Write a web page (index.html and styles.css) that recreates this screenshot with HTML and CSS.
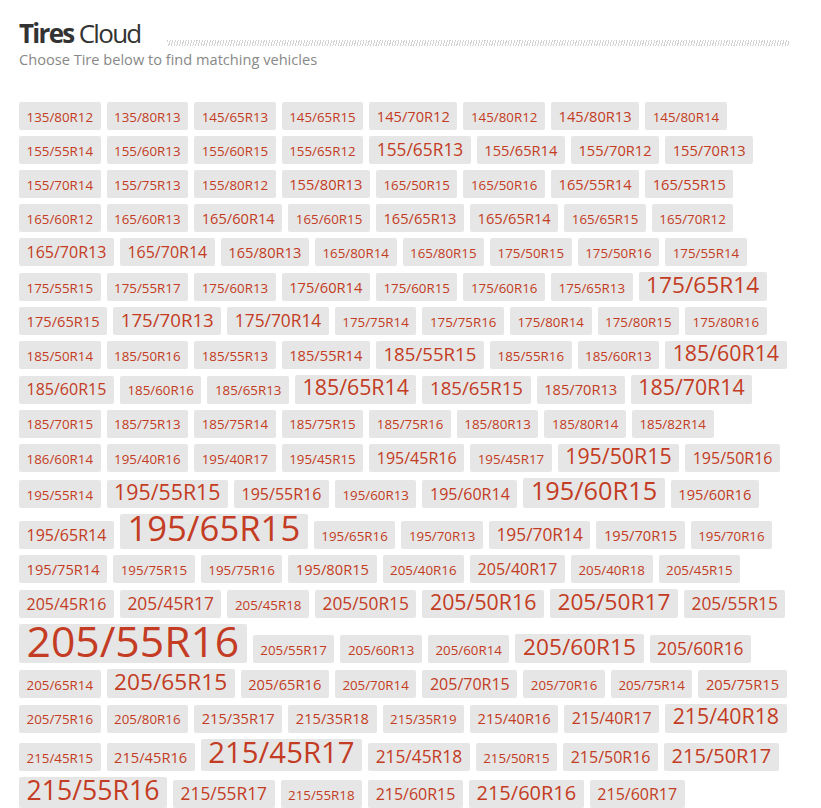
FILE: index.html
```html
<!DOCTYPE html>
<html lang="en">
<head>
<meta charset="utf-8">
<title>Tires Cloud</title>
<link rel="stylesheet" href="styles.css">
</head>
<body>
<div class="page">
  <div class="head">
    <h1 class="title"><b>Tires</b> Cloud</h1>
    <div class="stripes"></div>
  </div>
  <p class="sub">Choose Tire below to find matching vehicles</p>
  <div class="cloud">
    <a class="tag s10" href="#">135/80R12</a>
    <a class="tag s10" href="#">135/80R13</a>
    <a class="tag s10" href="#">145/65R13</a>
    <a class="tag s10" href="#">145/65R15</a>
    <a class="tag s11" href="#">145/70R12</a>
    <a class="tag s10" href="#">145/80R12</a>
    <a class="tag s11" href="#">145/80R13</a>
    <a class="tag s10" href="#">145/80R14</a>

    <a class="tag s10" href="#">155/55R14</a>
    <a class="tag s10" href="#">155/60R13</a>
    <a class="tag s10" href="#">155/60R15</a>
    <a class="tag s10" href="#">155/65R12</a>
    <a class="tag s13" href="#">155/65R13</a>
    <a class="tag s11" href="#">155/65R14</a>
    <a class="tag s11" href="#">155/70R12</a>
    <a class="tag s11" href="#">155/70R13</a>

    <a class="tag s10" href="#">155/70R14</a>
    <a class="tag s10" href="#">155/75R13</a>
    <a class="tag s10" href="#">155/80R12</a>
    <a class="tag s11" href="#">155/80R13</a>
    <a class="tag s10" href="#">165/50R15</a>
    <a class="tag s10" href="#">165/50R16</a>
    <a class="tag s11" href="#">165/55R14</a>
    <a class="tag s11" href="#">165/55R15</a>

    <a class="tag s10" href="#">165/60R12</a>
    <a class="tag s10" href="#">165/60R13</a>
    <a class="tag s11" href="#">165/60R14</a>
    <a class="tag s10" href="#">165/60R15</a>
    <a class="tag s11" href="#">165/65R13</a>
    <a class="tag s11" href="#">165/65R14</a>
    <a class="tag s10" href="#">165/65R15</a>
    <a class="tag s10" href="#">165/70R12</a>

    <a class="tag s12" href="#">165/70R13</a>
    <a class="tag s12" href="#">165/70R14</a>
    <a class="tag s11" href="#">165/80R13</a>
    <a class="tag s10" href="#">165/80R14</a>
    <a class="tag s10" href="#">165/80R15</a>
    <a class="tag s10" href="#">175/50R15</a>
    <a class="tag s10" href="#">175/50R16</a>
    <a class="tag s10" href="#">175/55R14</a>

    <a class="tag s10" href="#">175/55R15</a>
    <a class="tag s10" href="#">175/55R17</a>
    <a class="tag s10" href="#">175/60R13</a>
    <a class="tag s11" href="#">175/60R14</a>
    <a class="tag s10" href="#">175/60R15</a>
    <a class="tag s10" href="#">175/60R16</a>
    <a class="tag s10" href="#">175/65R13</a>
    <a class="tag s17" href="#">175/65R14</a>

    <a class="tag s11" href="#">175/65R15</a>
    <a class="tag s14" href="#">175/70R13</a>
    <a class="tag s13" href="#">175/70R14</a>
    <a class="tag s10" href="#">175/75R14</a>
    <a class="tag s10" href="#">175/75R16</a>
    <a class="tag s10" href="#">175/80R14</a>
    <a class="tag s10" href="#">175/80R15</a>
    <a class="tag s10" href="#">175/80R16</a>

    <a class="tag s10" href="#">185/50R14</a>
    <a class="tag s10" href="#">185/50R16</a>
    <a class="tag s10" href="#">185/55R13</a>
    <a class="tag s11" href="#">185/55R14</a>
    <a class="tag s14" href="#">185/55R15</a>
    <a class="tag s10" href="#">185/55R16</a>
    <a class="tag s10" href="#">185/60R13</a>
    <a class="tag s16" href="#">185/60R14</a>

    <a class="tag s12" href="#">185/60R15</a>
    <a class="tag s10" href="#">185/60R16</a>
    <a class="tag s10" href="#">185/65R13</a>
    <a class="tag s16" href="#">185/65R14</a>
    <a class="tag s14" href="#">185/65R15</a>
    <a class="tag s11" href="#">185/70R13</a>
    <a class="tag s16" href="#">185/70R14</a>

    <a class="tag s10" href="#">185/70R15</a>
    <a class="tag s10" href="#">185/75R13</a>
    <a class="tag s10" href="#">185/75R14</a>
    <a class="tag s10" href="#">185/75R15</a>
    <a class="tag s10" href="#">185/75R16</a>
    <a class="tag s10" href="#">185/80R13</a>
    <a class="tag s10" href="#">185/80R14</a>
    <a class="tag s10" href="#">185/82R14</a>

    <a class="tag s10" href="#">186/60R14</a>
    <a class="tag s10" href="#">195/40R16</a>
    <a class="tag s10" href="#">195/40R17</a>
    <a class="tag s10" href="#">195/45R15</a>
    <a class="tag s12" href="#">195/45R16</a>
    <a class="tag s10" href="#">195/45R17</a>
    <a class="tag s16" href="#">195/50R15</a>
    <a class="tag s12" href="#">195/50R16</a>

    <a class="tag s10" href="#">195/55R14</a>
    <a class="tag s16" href="#">195/55R15</a>
    <a class="tag s12" href="#">195/55R16</a>
    <a class="tag s10" href="#">195/60R13</a>
    <a class="tag s12" href="#">195/60R14</a>
    <a class="tag s19" href="#">195/60R15</a>
    <a class="tag s11" href="#">195/60R16</a>

    <a class="tag s12" href="#">195/65R14</a>
    <a class="tag s26" href="#">195/65R15</a>
    <a class="tag s10" href="#">195/65R16</a>
    <a class="tag s10" href="#">195/70R13</a>
    <a class="tag s13" href="#">195/70R14</a>
    <a class="tag s11" href="#">195/70R15</a>
    <a class="tag s10" href="#">195/70R16</a>

    <a class="tag s11" href="#">195/75R14</a>
    <a class="tag s10" href="#">195/75R15</a>
    <a class="tag s10" href="#">195/75R16</a>
    <a class="tag s11" href="#">195/80R15</a>
    <a class="tag s10" href="#">205/40R16</a>
    <a class="tag s12" href="#">205/40R17</a>
    <a class="tag s10" href="#">205/40R18</a>
    <a class="tag s10" href="#">205/45R15</a>

    <a class="tag s12" href="#">205/45R16</a>
    <a class="tag s13" href="#">205/45R17</a>
    <a class="tag s10" href="#">205/45R18</a>
    <a class="tag s13" href="#">205/50R15</a>
    <a class="tag s16" href="#">205/50R16</a>
    <a class="tag s17" href="#">205/50R17</a>
    <a class="tag s13" href="#">205/55R15</a>

    <a class="tag s32" href="#">205/55R16</a>
    <a class="tag s10" href="#">205/55R17</a>
    <a class="tag s10" href="#">205/60R13</a>
    <a class="tag s10" href="#">205/60R14</a>
    <a class="tag s17" href="#">205/60R15</a>
    <a class="tag s13" href="#">205/60R16</a>

    <a class="tag s10" href="#">205/65R14</a>
    <a class="tag s17" href="#">205/65R15</a>
    <a class="tag s11" href="#">205/65R16</a>
    <a class="tag s10" href="#">205/70R14</a>
    <a class="tag s12" href="#">205/70R15</a>
    <a class="tag s10" href="#">205/70R16</a>
    <a class="tag s10" href="#">205/75R14</a>
    <a class="tag s11" href="#">205/75R15</a>

    <a class="tag s10" href="#">205/75R16</a>
    <a class="tag s10" href="#">205/80R16</a>
    <a class="tag s11" href="#">215/35R17</a>
    <a class="tag s11" href="#">215/35R18</a>
    <a class="tag s10" href="#">215/35R19</a>
    <a class="tag s11" href="#">215/40R16</a>
    <a class="tag s12" href="#">215/40R17</a>
    <a class="tag s16" href="#">215/40R18</a>

    <a class="tag s10" href="#">215/45R15</a>
    <a class="tag s11" href="#">215/45R16</a>
    <a class="tag s22" href="#">215/45R17</a>
    <a class="tag s13" href="#">215/45R18</a>
    <a class="tag s10" href="#">215/50R15</a>
    <a class="tag s12" href="#">215/50R16</a>
    <a class="tag s15" href="#">215/50R17</a>

    <a class="tag s20" href="#">215/55R16</a>
    <a class="tag s13" href="#">215/55R17</a>
    <a class="tag s10" href="#">215/55R18</a>
    <a class="tag s12" href="#">215/60R15</a>
    <a class="tag s15" href="#">215/60R16</a>
    <a class="tag s12" href="#">215/60R17</a>
  </div>
</div>
</body>
</html>
```

FILE: styles.css
```css
html, body {
  margin: 0;
  padding: 0;
  background: #ffffff;
}

body {
  font-family: "Open Sans", "DejaVu Sans", sans-serif;
}

.page {
  width: 775px;
  padding: 18px 0 0 19px;
}

.head {
  display: flex;
  align-items: flex-start;
  width: 770px;
}

.title {
  margin: 0;
  font-size: 26px;
  line-height: 30px;
  font-weight: 400;
  color: #333333;
  letter-spacing: -1.7px;
  white-space: nowrap;
}

.title b {
  font-weight: 700;
}

.stripes {
  flex: 1;
  height: 6px;
  margin: 22px 0 0 26px;
  background: repeating-linear-gradient(105deg, #d2d2d2 0 1px, #ffffff 1px 2.6px);
}

.sub {
  margin: 1px 0 0;
  font-size: 14.6px;
  line-height: 20px;
  color: #888888;
}

.cloud {
  margin-top: 33px;
  display: flex;
  flex-wrap: wrap;
  align-items: flex-end;
  column-gap: 6px;
  row-gap: 6px;
}

.tag {
  display: flex;
  align-items: flex-end;
  box-sizing: border-box;
  height: max(28px, calc(17.67px + 0.5em));
  padding: 0 7.55px calc(8.8px - 0.05em);
  line-height: 0.776em;
  background: #e6e6e6;
  border-radius: 2px;
  color: #c33c23;
  text-decoration: none;
  white-space: nowrap;
}

.s10 { font-size: 10pt; }
.s11 { font-size: 11pt; }
.s12 { font-size: 12pt; }
.s13 { font-size: 13pt; }
.s14 { font-size: 14pt; }
.s15 { font-size: 15pt; }
.s16 { font-size: 16pt; }
.s17 { font-size: 17pt; }
.s19 { font-size: 19pt; }
.s20 { font-size: 20pt; }
.s22 { font-size: 22pt; }
.s26 { font-size: 26pt; }
.s32 { font-size: 32pt; }
```
